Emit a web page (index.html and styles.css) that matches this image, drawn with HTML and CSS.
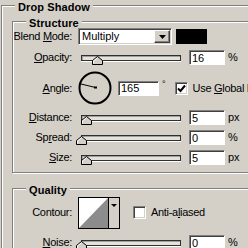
FILE: index.html
```html
<!DOCTYPE html>
<html lang="en">
<head>
    <meta charset="UTF-8">
    <title>Layer Style - Drop Shadow</title>
    <link rel="stylesheet" href="styles.css">
</head>
<body>
    <div class="group outer">
        <div class="legend">Drop Shadow</div>

        <div class="group structure">
            <div class="legend">Structure</div>

            <div class="row blend">
                <span class="label"><span>Blend <u>M</u>ode:</span></span>
                <div class="select">
                    <span class="select-text">Multiply</span>
                    <span class="drop-btn">
                        <svg width="7" height="4" viewBox="0 0 7 4"><path d="M0 0H7L3.5 4Z" fill="#000"/></svg>
                    </span>
                </div>
                <span class="swatch"></span>
            </div>

            <div class="row opacity">
                <span class="label"><span><u>O</u>pacity:</span></span>
                <div class="slider"><span class="thumb" style="--v: 16"></span></div>
                <input class="field" type="text" value="16">
                <span class="unit">%</span>
            </div>

            <div class="row angle">
                <span class="label"><span><u>A</u>ngle:</span></span>
                <svg class="dial" width="34" height="34" viewBox="0 0 34 34">
                    <circle cx="17" cy="17" r="15.5" fill="none" stroke="#000" stroke-width="2"/>
                    <line x1="17.5" y1="16.5" x2="1" y2="12.5" stroke="#000" stroke-width="1"/>
                    <rect x="16" y="15.5" width="3" height="2" fill="#000"/>
                </svg>
                <input class="field wide" type="text" value="165">
                <span class="degree">°</span>
                <span class="check checked">
                    <svg width="9" height="9" viewBox="0 0 9 9"><path d="M1 4.5L3.5 7L8 1.5" fill="none" stroke="#000" stroke-width="2"/></svg>
                </span>
                <span class="check-text">Use <u>G</u>lobal Light</span>
            </div>

            <div class="row distance">
                <span class="label"><span><u>D</u>istance:</span></span>
                <div class="slider"><span class="thumb" style="--v: 5"></span></div>
                <input class="field" type="text" value="5">
                <span class="unit">px</span>
            </div>

            <div class="row">
                <span class="label"><span>Sp<u>r</u>ead:</span></span>
                <div class="slider"><span class="thumb" style="--v: 0"></span></div>
                <input class="field" type="text" value="0">
                <span class="unit">%</span>
            </div>

            <div class="row">
                <span class="label"><span><u>S</u>ize:</span></span>
                <div class="slider"><span class="thumb" style="--v: 5"></span></div>
                <input class="field" type="text" value="5">
                <span class="unit">px</span>
            </div>
        </div>

        <div class="group quality">
            <div class="legend">Quality</div>

            <div class="row contour">
                <span class="label"><span>Contour:</span></span>
                <svg class="contour-box" width="42" height="32" viewBox="0 0 42 32">
                    <rect x="0.5" y="0.5" width="41" height="31" fill="#d4d0c8" stroke="#000"/>
                    <rect x="1" y="1" width="29" height="30" fill="#fff"/>
                    <path d="M1 31L30 1V31Z" fill="#8c8c8c"/>
                    <line x1="30.5" y1="1" x2="30.5" y2="31" stroke="#000"/>
                    <path d="M33 7H39L36 10Z" fill="#000"/>
                </svg>
                <span class="check"></span>
                <span class="check-text">Anti-a<u>l</u>iased</span>
            </div>

            <div class="row noise">
                <span class="label"><span><u>N</u>oise:</span></span>
                <div class="slider"><span class="thumb" style="--v: 0"></span></div>
                <input class="field" type="text" value="0">
                <span class="unit">%</span>
            </div>
        </div>
    </div>
</body>
</html>
```

FILE: styles.css
```css
html, body {
    overflow: hidden;
}

body {
    margin: 0;
    background-color: #d4d0c8;
    color: #000;
    font-family: "Liberation Sans", Arial, sans-serif;
    font-size: 11px;
    line-height: 13px;
}

u {
    text-decoration-thickness: 1px;
    text-underline-offset: 1px;
}

/* etched group boxes */
.group {
    border: 1px solid #808080;
    box-shadow: inset 1px 1px 0 #fff, 1px 1px 0 #fff;
}

.outer {
    margin: 5px 0 0 1px;
    width: 420px;
    height: 300px;
}

.structure {
    margin: 8px 0 0 10px;
    padding-bottom: 7px;
}

.quality {
    margin: 15px 0 0 10px;
    height: 80px;
}

.legend {
    width: max-content;
    margin: -5px 0 0 13px;
    padding: 0 3px;
    background-color: #d4d0c8;
    font-weight: bold;
    line-height: 12px;
    letter-spacing: 0.1px;
}

/* rows */
.row {
    display: flex;
    align-items: center;
    height: 15px;
    margin-top: 5px;
}

.label {
    display: flex;
    justify-content: flex-end;
    width: 59px;
    white-space: nowrap;
    letter-spacing: -0.3px;
    flex-shrink: 0;
}

.blend {
    height: 17px;
    margin-top: -1px;
}

.opacity {
    margin-top: 5px;
}

.angle {
    height: 34px;
    margin-top: 6px;
}

.distance {
    margin-top: 5px;
}

.contour {
    height: 31px;
    margin-top: 1px;
}

.noise {
    margin-top: 7px;
}

/* select */
.select {
    display: flex;
    align-items: center;
    box-sizing: border-box;
    width: 94px;
    height: 17px;
    margin-left: 6px;
    background-color: #fff;
    border: 1px solid;
    border-color: #808080 #fff #fff #808080;
    box-shadow: inset 1px 1px 0 #404040, inset -1px -1px 0 #d4d0c8;
    padding: 1px;
}

.select-text {
    padding-left: 2px;
    flex: 1;
}

.drop-btn {
    display: flex;
    align-items: center;
    justify-content: center;
    box-sizing: border-box;
    width: 16px;
    height: 13px;
    background-color: #d4d0c8;
    border: 1px solid;
    border-color: #fff #404040 #404040 #fff;
    box-shadow: inset -1px -1px 0 #808080;
}

.swatch {
    width: 31px;
    height: 15px;
    margin-left: 4px;
    background-color: #000;
}

/* slider */
.slider {
    position: relative;
    box-sizing: border-box;
    width: 100px;
    height: 6px;
    margin-left: 9px;
    background-color: #e4e2dc;
    border: 1px solid #303030;
    box-shadow: inset 1px 1px 0 #a0a0a0, 0 1px 0 #fff;
}

.thumb {
    position: absolute;
    top: 0;
    left: calc(var(--v) * 1px - 6px);
    width: 11px;
    height: 9px;
    background: url("data:image/svg+xml,%3Csvg xmlns='http://www.w3.org/2000/svg' width='11' height='9'%3E%3Cpath d='M5.5 0.5L10.5 4.5V8.5H0.5V4.5Z' fill='%23d4d0c8' stroke='%23000'/%3E%3Cpath d='M1.5 7.5V5L5.5 1.8' fill='none' stroke='%23fff'/%3E%3C/svg%3E") no-repeat;
}

/* text fields */
.field {
    box-sizing: border-box;
    width: 36px;
    height: 15px;
    margin: 0 0 0 8px;
    padding: 0 0 0 2px;
    background-color: #fff;
    border: 1px solid;
    border-color: #808080 #fff #fff #808080;
    box-shadow: inset 1px 1px 0 #404040;
    font: 11px "Liberation Sans", Arial, sans-serif;
    color: #000;
    outline: none;
}

.field.wide {
    width: 41px;
    margin-left: 6px;
}

.unit {
    margin-left: 3px;
}

.dial {
    margin-left: 6px;
    flex-shrink: 0;
}

.degree {
    margin: 0 0 7px 3px;
    font-size: 9px;
}

/* checkboxes */
.check {
    display: flex;
    align-items: center;
    justify-content: center;
    box-sizing: border-box;
    width: 13px;
    height: 13px;
    margin-left: 9px;
    background-color: #fff;
    border: 1px solid;
    border-color: #808080 #fff #fff #808080;
    box-shadow: inset 1px 1px 0 #404040, inset -1px -1px 0 #d4d0c8;
    flex-shrink: 0;
}

.check-text {
    margin-left: 5px;
    white-space: nowrap;
    letter-spacing: -0.3px;
}

.contour-box {
    margin-left: 6px;
    flex-shrink: 0;
}

.contour .check {
    margin-left: 13px;
}
```
